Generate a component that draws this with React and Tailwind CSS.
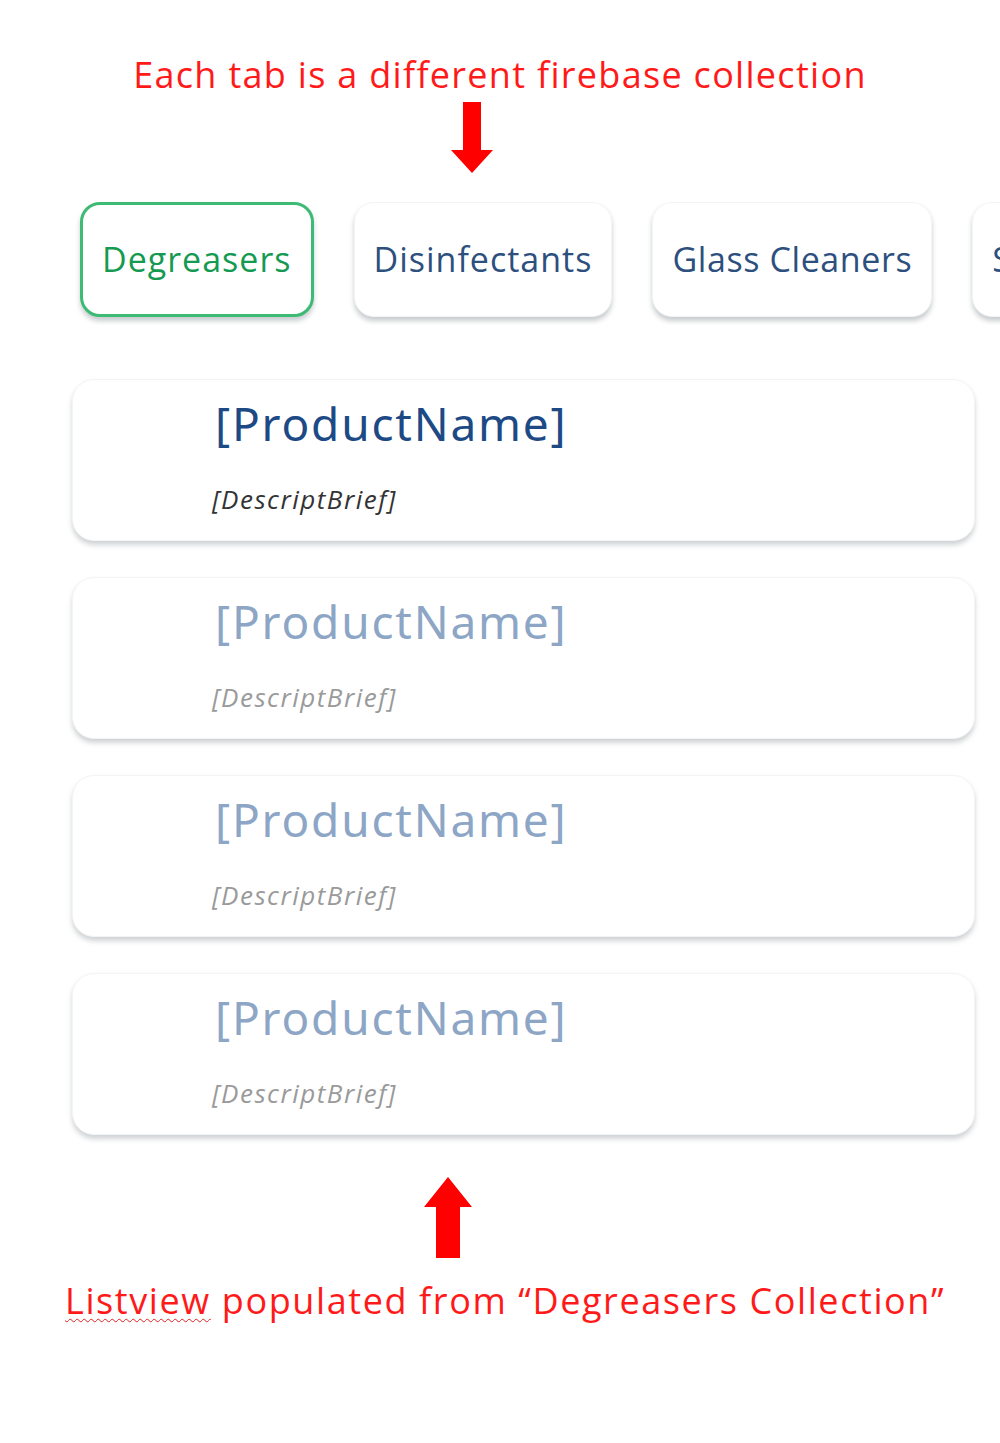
import React from "react";

const tabs = ["Degreasers", "Disinfectants", "Glass Cleaners", "Sanitizers"];

function DownArrow() {
  return (
    <svg width="44" height="72" viewBox="0 0 44 72" className="block">
      <path d="M13 0 H31 V48 H43 L22 71 L1 48 H13 Z" fill="#ff0000" />
    </svg>
  );
}

function UpArrow() {
  return (
    <svg width="50" height="82" viewBox="0 0 50 82" className="block">
      <path d="M25 0 L49 30 H37 V81 H13 V30 H1 Z" fill="#ff0000" />
    </svg>
  );
}

function ProductCard({ active }) {
  return (
    <div className="h-[162px] w-[903px] rounded-[22px] border border-gray-100 bg-white pl-[142px] pt-[13px] shadow-[0_4px_5px_rgba(120,130,135,0.35)]">
      <div
        className={`font-['Noto_Sans',sans-serif] text-[46px] leading-[60px] tracking-[1.8px] ${
          active ? "text-[#1d4a85]" : "text-[#8da6c6]"
        }`}
      >
        [ProductName]
      </div>
      <div
        className={`mt-[30px] -ml-[3px] font-['Open_Sans',sans-serif] text-[26px] italic leading-[32px] tracking-[1.5px] ${
          active ? "text-[#333]" : "text-[#9a9a9a]"
        }`}
      >
        [DescriptBrief]
      </div>
    </div>
  );
}

export default function App() {
  return (
    <div className="h-[1443px] w-[1000px] overflow-hidden bg-white font-['Open_Sans',sans-serif]">
      <div className="pt-[51px] text-center text-[36px] leading-[48px] tracking-[1.3px] text-[#ff1a1a]">
        Each tab is a different firebase collection
      </div>
      <div className="mt-[3px] flex justify-center">
        <div className="-ml-[56px]">
          <DownArrow />
        </div>
      </div>

      <div className="mt-[28px] flex gap-[40px] overflow-hidden pl-[80px]">
        {tabs.map((t, i) => (
          <div
            key={t}
            className={`mb-[8px] flex h-[115px] shrink-0 items-center rounded-[20px] bg-white px-[19px] text-[34px] shadow-[0_4px_5px_rgba(120,130,135,0.4)] ${
              i === 0
                ? "border-[3px] border-[#3dbb74] text-[#159a52]"
                : "border border-gray-100 text-[#2d4f7e]"
            } ${i === 2 ? "tracking-[0.6px]" : "tracking-[1px]"}`}
          >
            {t}
          </div>
        ))}
      </div>

      <div className="mt-[54px] flex flex-col gap-[36px] pl-[72px]">
        <ProductCard active />
        <ProductCard />
        <ProductCard />
        <ProductCard />
      </div>

      <div className="mt-[42px] flex justify-center">
        <div className="-ml-[104px]">
          <UpArrow />
        </div>
      </div>
      <div className="mt-[18px] pl-[65px] text-[36px] leading-[48px] tracking-[1.6px] text-[#ff1a1a]">
        <span className="underline decoration-wavy decoration-[#e02020] decoration-1 underline-offset-4">
          Listview
        </span>{" "}
        populated from “Degreasers Collection”
      </div>
    </div>
  );
}
